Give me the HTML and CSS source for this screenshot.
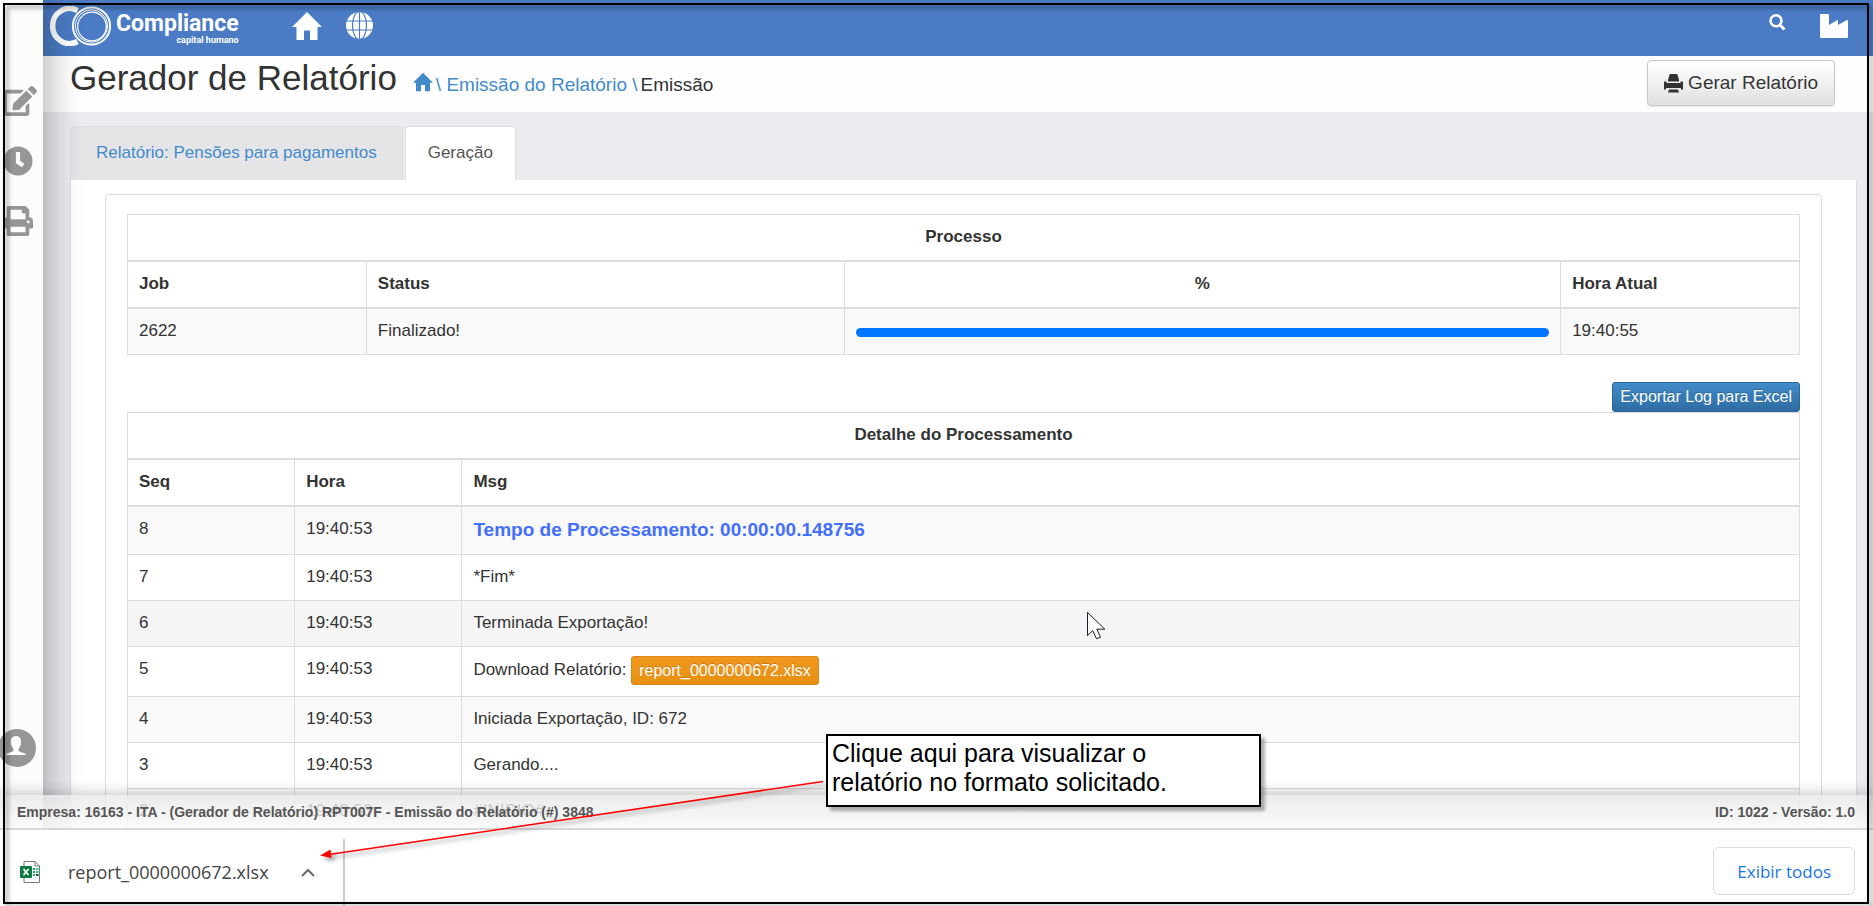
FILE: index.html
```html
<!DOCTYPE html>
<html lang="pt-BR">
<head>
<meta charset="utf-8">
<title>Gerador de Relatório</title>
<link rel="stylesheet" href="styles.css">
</head>
<body>
<svg class="sprite" aria-hidden="true">
  <symbol id="home" viewBox="0 0 30 28"><path d="M15 0 30 15H25.500V28H18V18.500H12V28H4.500V15H0Z"/></symbol>
  <symbol id="printer" viewBox="0 0 19 19"><path d="M6.500 0h6l1 .5L15 6v1.500H4V6L5.500.5ZM0 7.500h2.500V9h14V7.500H19V15.500h-2v-1.500H2v1.500H0ZM5 15.500h9l1 3H4Z"/></symbol>
</svg>

<div class="app">
  <aside class="sidebar">
    <nav class="side-nav">
      <a href="#" aria-label="Editar"><svg class="side-icon" viewBox="0 0 576 512"><path d="M402.600 83.200l90.200 90.200c3.800 3.800 3.800 10 0 13.800L274.400 405.600l-92.800 10.300c-12.400 1.400-22.900-9.100-21.500-21.500l10.300-92.800L388.800 83.200c3.800-3.800 10-3.800 13.800 0zm162-22.900l-48.800-48.800c-15.200-15.200-39.900-15.200-55.200 0l-35.400 35.400c-3.800 3.800-3.800 10 0 13.800l90.200 90.200c3.800 3.800 10 3.800 13.800 0l35.400-35.400c15.200-15.300 15.200-40 0-55.200zM384 346.200V448H64V128h229.800c3.200 0 6.200-1.300 8.500-3.500l40-40c7.600-7.600 2.200-20.500-8.500-20.500H48C21.500 64 0 85.500 0 112v352c0 26.500 21.500 48 48 48h352c26.500 0 48-21.500 48-48V306.200c0-10.700-12.900-16-20.500-8.500l-40 40c-2.200 2.300-3.500 5.300-3.500 8.500z"/></svg></a>
      <a href="#" aria-label="Histórico"><svg class="side-icon square" viewBox="0 0 512 512"><path d="M256 8C119 8 8 119 8 256s111 248 248 248 248-111 248-248S393 8 256 8zm57.100 350.100L224.900 294c-3.100-2.300-4.900-5.900-4.900-9.700V116c0-6.600 5.400-12 12-12h48c6.600 0 12 5.400 12 12v137.700l63.500 46.200c5.400 3.900 6.500 11.400 2.600 16.800l-28.200 38.800c-3.900 5.300-11.400 6.500-16.800 2.600z"/></svg></a>
      <a href="#" aria-label="Imprimir"><svg class="side-icon square" viewBox="0 0 512 512"><path d="M448 192V77.300c0-8.500-3.400-16.600-9.400-22.600L393.400 9.400c-6-6-14.100-9.400-22.600-9.400H96C78.300 0 64 14.300 64 32v160c-35.300 0-64 28.700-64 64v112c0 8.800 7.200 16 16 16h48v96c0 17.700 14.300 32 32 32h320c17.700 0 32-14.300 32-32v-96h48c8.800 0 16-7.200 16-16V256c0-35.300-28.700-64-64-64zm-64 256H128v-96h256v96zm0-224H128V64h192v48c0 8.800 7.200 16 16 16h48v96zm48 72c-13.300 0-24-10.700-24-24s10.700-24 24-24 24 10.700 24 24-10.700 24-24 24z"/></svg></a>
    </nav>
    <a href="#" class="user" aria-label="Usuário"><svg viewBox="0 0 38 38"><circle cx="19" cy="19" r="19" fill="#969696"/><path fill="#fff" d="M18 7c4 0 5.500 3 5 7-.3 3-1.500 4.500-2.500 6v2c2 1.500 7 1.500 7.500 4H8c.5-2.500 5.500-2.500 7.500-4v-2c-1-1.500-2.200-3-2.500-6-.5-4 1-7 5-7Z"/></svg></a>
  </aside>

  <div class="page">
    <header class="topbar">
      <a href="#" class="brand">
        <svg class="brand-mark" viewBox="0 0 62 40"><g fill="none" stroke="#fff"><path d="M27.500 4.500A17 17.500 0 1 0 27.500 35.500" stroke-width="5.500"/><circle cx="41.500" cy="20" r="18.600" stroke-width="2"/><circle cx="41.500" cy="20" r="16.200" stroke-width="1"/><circle cx="42" cy="20.500" r="14.300" stroke-width="1.200"/></g></svg>
        <span class="brand-text"><span class="brand-name">Compliance</span><span class="brand-sub">capital humano</span></span>
      </a>
      <nav class="top-nav">
        <a href="#" aria-label="Início"><svg class="top-home"><use href="#home"/></svg></a>
        <a href="#" aria-label="Idioma"><svg class="top-globe" viewBox="0 0 27 27"><circle cx="13.500" cy="13.500" r="13.500" fill="#fff"/><g fill="none" stroke="#4a7bc4" stroke-width="1.200"><path d="M13.500 0v27M0 9h27M0 18h27"/><ellipse cx="13.500" cy="13.500" rx="7" ry="14"/></g></svg></a>
      </nav>
      <nav class="top-tools">
        <a href="#" aria-label="Pesquisar"><svg class="top-search" viewBox="0 0 17 17"><g fill="none" stroke="#fff"><circle cx="7" cy="6.800" r="5.500" stroke-width="2.500"/><path d="M11 11l4.500 4.500" stroke-width="3"/></g></svg></a>
        <a href="#" aria-label="Empresa"><svg class="top-factory" viewBox="0 0 28 24"><path fill="#fff" d="M1 0h7q1 0 1 1v10l8.500-5q.5 0 .5 1v4l9-5q1 0 1 1v16q0 1-1 1H1q-1 0-1-1V1Q0 0 1 0Z"/></svg></a>
      </nav>
    </header>

    <div class="title-bar">
      <h1>Gerador de Relatório</h1>
      <nav class="crumbs"><a href="#" aria-label="Início"><svg class="crumb-home"><use href="#home"/></svg></a><a href="#">\ Emissão do Relatório \</a><span>Emissão</span></nav>
      <button class="btn-default" type="button"><svg class="btn-icon"><use href="#printer"/></svg>Gerar Relatório</button>
    </div>

    <main class="content">
      <div class="tabs">
        <a href="#" class="tab">Relatório: Pensões para pagamentos</a>
        <a href="#" class="tab active">Geração</a>
      </div>
      <section class="panel">
        <div class="box">
          <table class="process">
            <colgroup><col class="c1"><col class="c2"><col class="c3"><col class="c1"></colgroup>
            <thead>
              <tr><th colspan="4" class="center">Processo</th></tr>
              <tr><th>Job</th><th>Status</th><th class="center">%</th><th>Hora Atual</th></tr>
            </thead>
            <tbody>
              <tr><td>2622</td><td>Finalizado!</td><td><progress value="100" max="100" aria-label="Progresso"></progress></td><td>19:40:55</td></tr>
            </tbody>
          </table>
          <div class="actions"><button class="btn-small blue" type="button">Exportar Log para Excel</button></div>
          <table class="details">
            <colgroup><col class="tenth"><col class="tenth"><col></colgroup>
            <thead>
              <tr><th colspan="3" class="center">Detalhe do Processamento</th></tr>
              <tr><th>Seq</th><th>Hora</th><th>Msg</th></tr>
            </thead>
            <tbody>
              <tr><td>8</td><td>19:40:53</td><td><strong class="elapsed">Tempo de Processamento: 00:00:00.148756</strong></td></tr>
              <tr><td>7</td><td>19:40:53</td><td>*Fim*</td></tr>
              <tr class="hover"><td>6</td><td>19:40:53</td><td>Terminada Exportação!</td></tr>
              <tr><td>5</td><td>19:40:53</td><td>Download Relatório: <a href="#" class="btn-small orange">report_0000000672.xlsx</a></td></tr>
              <tr><td>4</td><td>19:40:53</td><td>Iniciada Exportação, ID: 672</td></tr>
              <tr><td>3</td><td>19:40:53</td><td>Gerando....</td></tr>
              <tr><td>2</td><td>19:40:53</td><td>#INICIO#</td></tr>
            </tbody>
          </table>
        </div>
      </section>
    </main>
  </div>

  <footer class="status"><span>Empresa: 16163 - ITA - (Gerador de Relatório) RPT007F - Emissão do Relatório (#) 3848</span><span>ID: 1022 - Versão: 1.0</span></footer>
</div>

<div class="downloads">
  <div class="download">
    <svg class="xls" viewBox="0 0 20 22"><path d="M4 .5h11l4.500 4.500v16.500H4Z" fill="#fff" stroke="#777"/><path d="M15 .5V5h4.500" fill="none" stroke="#777"/><path d="M13 7h2v2h-2zm0 3h2v2h-2zm0 3h2v2h-2z" fill="#21a366"/><path d="M16 7h2.500v2H16zm0 3h2.500v2H16z" fill="#33c481"/><path d="M16 13h2.500v2H16z" fill="#185c37"/><rect y="5" width="12" height="12" rx="1" fill="#107c41"/><path d="M3.500 8l5 6M8.500 8l-5 6" stroke="#fff" stroke-width="1.800"/></svg>
    <span class="file">report_0000000672.xlsx</span>
    <button class="chevron" type="button" aria-label="Opções"><svg viewBox="0 0 14 9"><path d="M1 8l6-6 6 6" fill="none" stroke="#6b6b6b" stroke-width="2.200"/></svg></button>
  </div>
  <button class="show-all" type="button">Exibir todos</button>
</div>

<div class="frame"></div>
<svg class="arrow" viewBox="0 0 504 80"><path d="M503 1.500 9 74.500" fill="none" stroke="red" stroke-width="1.500"/><path d="M0 75.500 10.500 69.500 11.500 78Z" fill="red"/></svg>
<div class="note">Clique aqui para visualizar o<br>relatório no formato solicitado.</div>
<svg class="cursor" viewBox="0 0 19 28"><path d="M.5.500v23l5.200-4.800 3.800 8 4-1.500-3.700-8h8Z" fill="#fff" stroke="#1a1a2a"/></svg>
</body>
</html>
```
FILE: styles.css
```css
* { box-sizing: border-box; }
body {
  margin: 0;
  height: 100vh;
  display: flex;
  flex-direction: column;
  overflow: hidden;
  background: #fff;
  color: #333;
  font-family: "Liberation Sans", Arial, sans-serif;
  font-size: 17px;
  line-height: 25px;
}
a { color: #428bca; text-decoration: none; }
button { font-family: inherit; cursor: pointer; }
svg { display: block; fill: currentColor; }
.sprite { display: none; }

.app { flex: 1; min-height: 0; display: flex; position: relative; overflow: hidden; }
.sidebar {
  flex: none;
  width: 43px;
  position: relative;
  z-index: 1;
  display: flex;
  flex-direction: column;
  justify-content: space-between;
  padding: 86px 0 63px;
  background: #fcfcfc;
  box-shadow: 0 0 38px rgba(0, 0, 0, .38);
}
.side-nav { display: flex; flex-direction: column; gap: 30px; padding-left: 3px; }
.side-nav a { color: #969696; }
.side-icon { width: 34px; height: 30px; }
.side-icon.square { width: 30px; }
.user { margin-left: -2px; width: 38px; }

.page { flex: 1; min-width: 0; background: #ebebf0; }
.topbar { height: 56px; display: flex; align-items: flex-start; background: #4a7bc4; color: #fff; }
.topbar a { color: #fff; }
.brand { display: flex; padding: 6px 0 0 7px; gap: 4px; }
.brand-mark { width: 62px; height: 40px; }
.brand-text { display: flex; flex-direction: column; align-items: flex-end; padding-top: 6px; font-family: Roboto, sans-serif; font-weight: 700; }
.brand-name { font-size: 23px; line-height: 24px; }
.brand-sub { font-size: 9px; line-height: 8px; }
.top-nav { display: flex; gap: 24px; padding: 12px 0 0 53px; }
.top-home { width: 30px; height: 28px; }
.top-globe { width: 27px; height: 27px; }
.top-tools { margin-left: auto; display: flex; gap: 34px; padding: 14px 25px 0 0; }
.top-search { width: 17px; height: 17px; }
.top-factory { width: 28px; height: 24px; }

.title-bar { height: 56px; display: flex; align-items: flex-start; padding: 4px 38px 0 27px; background: #fefefe; }
h1 { margin: 0; font-size: 35px; line-height: 36px; font-weight: 400; }
.crumbs { display: flex; gap: 3px; padding: 12px 0 0 16px; font-size: 19px; line-height: 25px; }
.crumb-home { width: 20px; height: 20px; }
.btn-default {
  margin-left: auto;
  height: 46px;
  display: flex;
  align-items: center;
  gap: 5px;
  padding: 0 16px;
  border: 1px solid #c8c8c8;
  border-radius: 4px;
  background: linear-gradient(#fff, #e0e0e0);
  box-shadow: 0 1px 2px rgba(0, 0, 0, .1);
  color: #333;
  font-size: 19px;
  text-shadow: 0 1px 0 #fff;
}
.btn-icon { width: 19px; height: 19px; }

.content { padding: 14px 16px 0 27px; }
.tabs { display: flex; gap: 2px; }
.tab { padding: 14px 25px; border: 1px solid #ddd; border-bottom: 0; border-radius: 4px 4px 0 0; background: #e5e5e7; line-height: 24px; padding-bottom: 15px; }
.tab.active { padding-left: 22px; padding-right: 22px; background: #fff; color: #555; }
.panel { padding: 14px 34px 0; border: 1px solid #ddd; border-top: 0; background: #fff; }
.box { padding: 19px 21px 0; border: 1px solid #ddd; border-radius: 4px; }

table { width: 100%; border-collapse: collapse; table-layout: fixed; }
th, td { padding: 9px 11px 11px; border: 1px solid #ddd; text-align: left; vertical-align: top; }
th { border-bottom-width: 2px; }
th.center { text-align: center; }
tbody tr:nth-child(odd) { background: #f9f9f9; }
tbody tr.hover { background: #f5f5f5; }
.c1 { width: 14.285%; }
.c2 { width: 28.571%; }
.c3 { width: 42.857%; }
.tenth { width: 10%; }
progress { display: block; width: 100%; height: 9px; margin-top: 10px; appearance: none; border: 0; border-radius: 5px; overflow: hidden; background: #eee; }
progress::-webkit-progress-bar { background: #eee; }
progress::-webkit-progress-value { background: #0075ff; }
.elapsed { display: block; color: #426fff; font-size: 19px; line-height: 27px; }
.actions { display: flex; justify-content: flex-end; padding-top: 27px; }
.btn-small { display: inline-block; height: 30px; padding: 0 7px; border: 1px solid; border-radius: 3px; color: #fff; font-size: 16px; line-height: 28px; text-shadow: 0 -1px 0 rgba(0, 0, 0, .2); }
.blue { border-color: #2b669a; background: linear-gradient(#428bca, #2d6ca2); }
.orange { height: 29px; line-height: 27px; vertical-align: middle; border-color: #d9861a; background: linear-gradient(#f0981f, #e8910f); }

.status {
  position: absolute;
  z-index: 2;
  left: 0;
  right: 0;
  bottom: 0;
  height: 35px;
  display: flex;
  justify-content: space-between;
  padding: 5px 18px 0 17px;
  border-bottom: 2px solid #d8d8d8;
  background: linear-gradient(rgba(232, 232, 232, .8), rgba(250, 250, 250, .8));
  box-shadow: 0 -2px 14px rgba(0, 0, 0, .22);
  color: #555;
  font-size: 14px;
  font-weight: 700;
}

.downloads { flex: none; height: 76px; display: flex; justify-content: space-between; align-items: flex-start; padding-right: 18px; background: #fff; font-family: "Open Sans", "Noto Sans", sans-serif; }
.download { display: flex; align-items: center; height: 66px; margin-top: 9px; padding: 0 28px 0 20px; border-right: 2px solid #ccc; color: #444; }
.xls { width: 20px; height: 22px; }
.file { padding: 0 32px 0 28px; font-size: 18px; }
.chevron { padding: 0; border: 0; background: none; }
.chevron svg { width: 14px; height: 9px; }
.show-all { height: 48px; margin-top: 17px; padding: 0 23px; border: 1px solid #dadce0; border-radius: 6px; background: #fff; color: #1a73e8; font-size: 17px; font-weight: 500; }

.frame { position: absolute; z-index: 5; inset: 3px 4px 2px 3px; border: 2px solid #000; filter: drop-shadow(3px 3px 2px rgba(0, 0, 0, .45)); pointer-events: none; }
.arrow { position: absolute; z-index: 6; left: 320px; top: 780px; width: 504px; height: 80px; filter: drop-shadow(3px 3px 2px rgba(0, 0, 0, .4)); pointer-events: none; }
.note { position: absolute; z-index: 6; left: 826px; top: 734px; width: 435px; height: 73px; padding: 3px 4px; border: 2px solid #000; background: #fff; box-shadow: 4px 4px 3px rgba(0, 0, 0, .3); color: #000; font-size: 25px; line-height: 29px; }
.cursor { position: absolute; z-index: 6; left: 1087px; top: 612px; width: 19px; height: 28px; }
```
